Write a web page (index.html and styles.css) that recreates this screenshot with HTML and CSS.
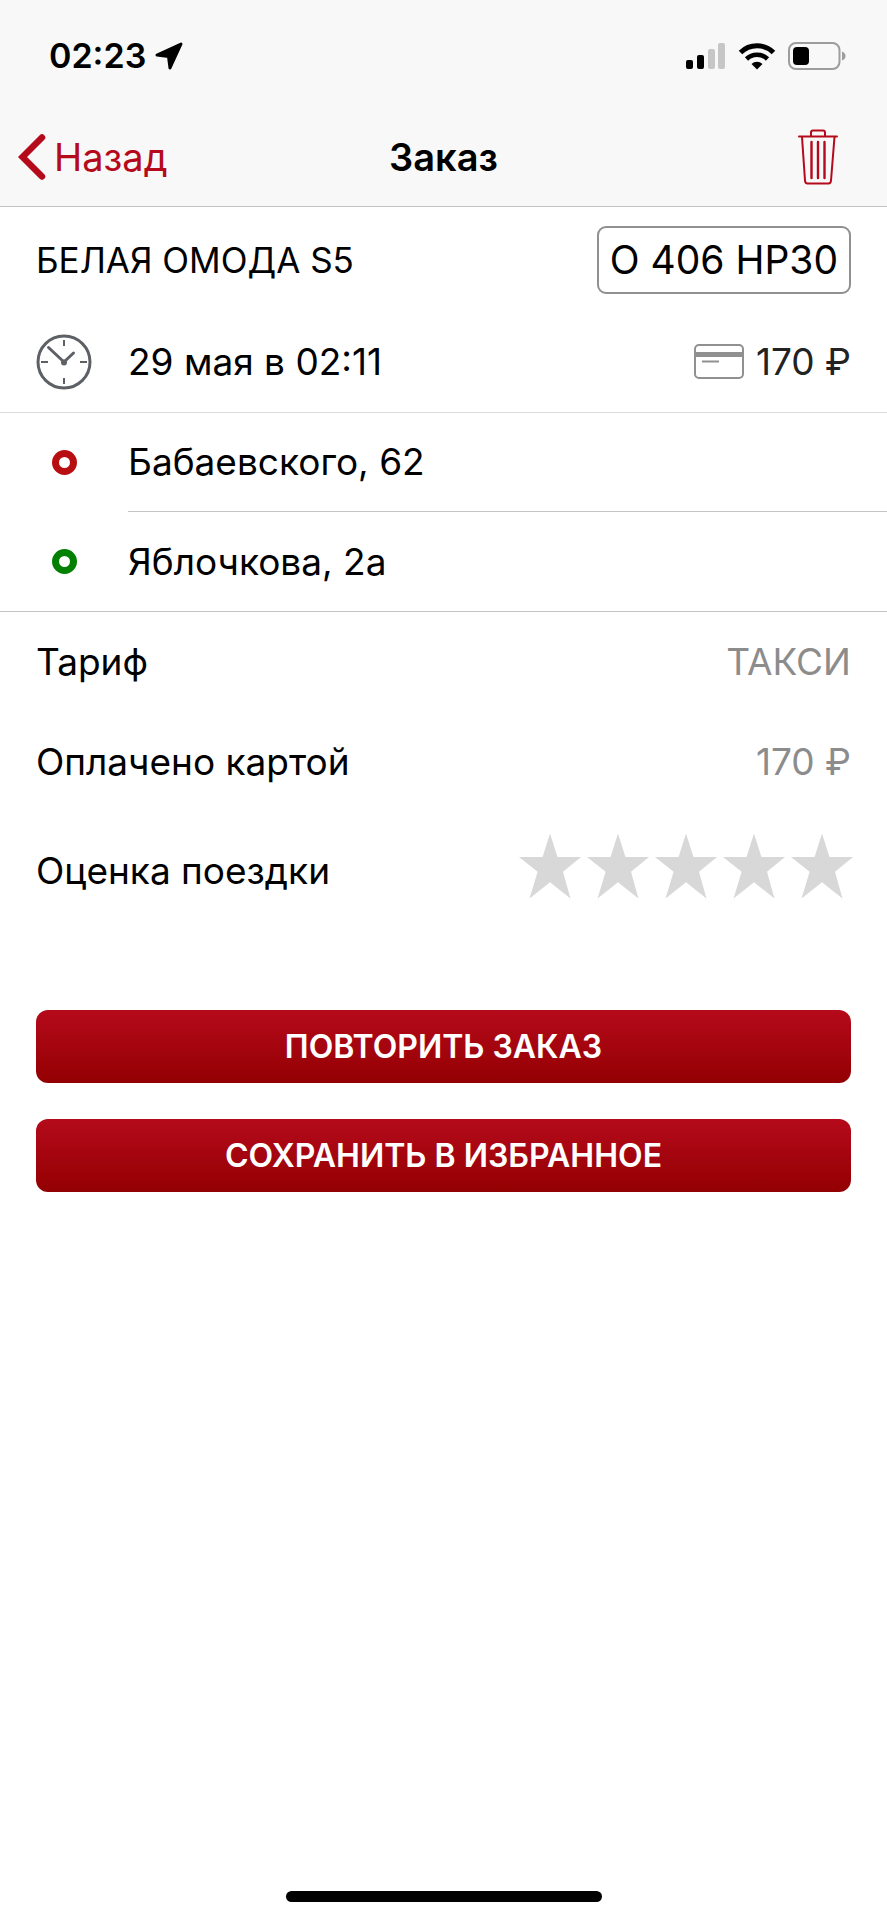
FILE: index.html
```
<!DOCTYPE html>
<html lang="ru">
<head>
<meta charset="utf-8">
<meta name="viewport" content="width=device-width, initial-scale=1">
<title>Заказ</title>
<link rel="stylesheet" href="styles.css">
</head>
<body>
<div class="screen">
  <header class="header">
    <div class="status">
      <div class="status-side">
        <time class="clock">02:23</time>
        <svg class="location" viewBox="0 0 28 28" aria-hidden="true"><path d="M26 2L15 26L13.500 14.500L2 13Z" fill="#000" stroke="#000" stroke-width="3" stroke-linejoin="round"/></svg>
      </div>
      <div class="status-side status-icons">
        <svg class="signal" viewBox="0 0 40 28" aria-hidden="true"><rect x="0" y="18" width="7" height="9" rx="2"/><rect x="11" y="13" width="7" height="14" rx="2"/><rect x="22" y="7" width="7" height="20" rx="2" fill="#c6c6c6"/><rect x="32" y="1" width="7" height="26" rx="2" fill="#c6c6c6"/></svg>
        <svg class="wifi" viewBox="0 0 38 28" aria-hidden="true"><path d="M2.500 10.500A23.500 23.500 0 0 1 35.500 10.500" fill="none" stroke="#000" stroke-width="5"/><path d="M8.500 17A15 15 0 0 1 29.500 17" fill="none" stroke="#000" stroke-width="4.600"/><path d="M13.500 22A8 8 0 0 1 24.500 22L19 27.500Z"/></svg>
        <svg class="battery" viewBox="0 0 58 28" aria-hidden="true"><rect x="1" y="1" width="50.500" height="26" rx="7" fill="none" stroke="#9d9d9d" stroke-width="2"/><rect x="5" y="5" width="16" height="18" rx="4"/><path d="M54 9.500Q57.500 11 57.500 14T54 18.500Z" fill="#9d9d9d"/></svg>
      </div>
    </div>
    <nav class="nav">
      <button class="back" type="button">
        <svg class="chevron" viewBox="0 0 28 46" aria-hidden="true"><path d="M24 3.500L4.500 23L24 42.500" fill="none" stroke="currentColor" stroke-width="6.500" stroke-linecap="round"/></svg>
        <span>Назад</span>
      </button>
      <h1 class="title">Заказ</h1>
      <button class="trash" type="button" aria-label="Удалить заказ">
        <svg class="trash-icon" viewBox="0 0 40 56" aria-hidden="true"><g fill="none" stroke="currentColor" stroke-width="2"><path d="M1 7.500H39" stroke-linecap="round"/><path d="M13 7V3.500Q13 1.500 15 1.500H25Q27 1.500 27 3.500V7"/><path d="M4 8L7 51.500Q7.200 54.500 9.500 54.500H30.500Q32.800 54.500 33 51.500L36.500 8"/><path d="M13.500 13V49M20 13V49M26.500 13V49" stroke-width="2.400" stroke-linecap="round"/></g></svg>
      </button>
    </nav>
  </header>

  <main>
    <section class="group">
      <div class="row row-car">
        <h2 class="car">БЕЛАЯ ОМОДА S5</h2>
        <span class="plate">О 406 НР30</span>
      </div>
      <div class="row">
        <svg class="lead clock-icon" viewBox="0 0 56 56" aria-hidden="true"><g fill="none" stroke="#5d6065"><circle cx="28" cy="28" r="26" stroke-width="3"/><path d="M28 6V12M28 44V50M5 28H12M44 28H51" stroke-width="2"/><path d="M12.500 13.500L28 28L37.500 19" stroke-width="3" stroke-linecap="round"/></g><circle cx="28" cy="28.500" r="3" fill="#5d6065"/></svg>
        <time class="grow">29 мая в 02:11</time>
        <span class="price">
          <svg class="card" viewBox="0 0 50 36" aria-hidden="true"><rect x="1" y="1" width="48" height="33" rx="4" fill="none" stroke="#909090" stroke-width="2"/><path d="M1 10.500H49" stroke="#909090" stroke-width="5"/><path d="M8 17.500H25" stroke="#909090" stroke-width="2"/></svg>
          170 ₽
        </span>
      </div>
    </section>

    <ul class="group route">
      <li class="row"><span class="lead"><i class="dot dot-from"></i></span><span class="stop">Бабаевского, 62</span></li>
      <li class="row"><span class="lead"><i class="dot dot-to"></i></span><span class="stop">Яблочкова, 2а</span></li>
    </ul>

    <section>
      <div class="row"><span class="grow">Тариф</span><span class="value">ТАКСИ</span></div>
      <div class="row"><span class="grow">Оплачено картой</span><span class="value">170 ₽</span></div>
      <div class="row row-rating">
        <span class="grow" id="rating">Оценка поездки</span>
        <div class="stars" role="radiogroup" aria-labelledby="rating">
          <input class="star" type="radio" name="rate" value="1" aria-label="1">
          <input class="star" type="radio" name="rate" value="2" aria-label="2">
          <input class="star" type="radio" name="rate" value="3" aria-label="3">
          <input class="star" type="radio" name="rate" value="4" aria-label="4">
          <input class="star" type="radio" name="rate" value="5" aria-label="5">
        </div>
      </div>
    </section>

    <div class="actions">
      <button class="action" type="button">ПОВТОРИТЬ ЗАКАЗ</button>
      <button class="action" type="button">СОХРАНИТЬ В ИЗБРАННОЕ</button>
    </div>
  </main>

  <div class="home"></div>
</div>
</body>
</html>
```

FILE: styles.css
```
* {
  box-sizing: border-box;
}

body {
  margin: 0;
  background: #fff;
  color: #000;
  font: 400 37px/48px Inter, "Noto Sans", sans-serif;
}

button {
  border: 0;
  padding: 0;
  background: none;
  font: inherit;
  color: inherit;
  cursor: pointer;
}

svg {
  display: block;
  flex: none;
}

.screen {
  display: flex;
  flex-direction: column;
  min-height: 100vh;
}

main {
  flex: 1;
}

.header {
  background: #f8f8f8;
  border-bottom: 1px solid #c4c4c4;
}

.status {
  display: flex;
  align-items: center;
  justify-content: space-between;
  height: 112px;
  padding: 0 41px 0 49px;
}

.status-side {
  display: flex;
  align-items: center;
  gap: 9px;
}

.status-icons {
  gap: 12px;
}

.clock {
  font-size: 34px;
  font-weight: 600;
}

.location {
  width: 28px;
  height: 28px;
}

.signal {
  width: 40px;
  height: 28px;
}

.wifi {
  width: 38px;
  height: 28px;
}

.battery {
  width: 58px;
  height: 28px;
}

.nav {
  display: grid;
  grid-template-columns: 1fr auto 1fr;
  align-items: center;
  height: 94px;
  padding: 0 18px 4px;
}

.back,
.trash {
  display: flex;
  align-items: center;
  color: #b50a1b;
}

.back {
  justify-self: start;
  gap: 8px;
  font-size: 38px;
}

.trash {
  justify-self: end;
  padding: 0 31px;
}

.chevron {
  width: 28px;
  height: 46px;
}

.trash-icon {
  width: 40px;
  height: 56px;
}

.title {
  margin: 0;
  font-size: 38px;
  font-weight: 600;
}

.group {
  margin: 0;
  padding: 0;
  border-bottom: 1px solid #dcdcdc;
}

.route {
  list-style: none;
  border-color: #c4c4c4;
}

.row {
  display: flex;
  align-items: center;
  min-height: 100px;
  padding: 0 36px;
}

.row-car {
  min-height: 105px;
  justify-content: space-between;
}

.row-rating {
  min-height: 118px;
  padding-right: 34px;
}

.car {
  margin: 0;
  font-size: 35px;
  font-weight: 400;
}

.plate {
  padding: 8px 11px;
  border: 2px solid #909090;
  border-radius: 9px;
  font-size: 39px;
}

.lead {
  display: flex;
  flex: none;
  justify-content: center;
  width: 56px;
  margin-right: 36px;
}

.clock-icon {
  height: 56px;
}

.grow {
  flex: 1;
}

.price {
  display: flex;
  align-items: center;
  gap: 12px;
  color: #222;
}

.card {
  width: 50px;
  height: 36px;
}

.dot {
  width: 25px;
  height: 25px;
  border: 7px solid;
  border-radius: 50%;
}

.dot-from {
  color: #b90e11;
}

.dot-to {
  color: #028002;
}

.route .row {
  min-height: 99px;
  padding-right: 0;
}

.stop {
  flex: 1;
  line-height: 98px;
  border-bottom: 1px solid #c4c4c4;
}

.row:last-child .stop {
  border-bottom: 0;
}

.value {
  color: #8c8c8c;
}

.stars {
  display: flex;
  gap: 6px;
  padding-bottom: 10px;
}

.star {
  appearance: none;
  width: 62px;
  height: 65px;
  margin: 0;
  background: #d8d8d8;
  clip-path: polygon(50% 0, 62% 36%, 100% 36%, 71% 59%, 83% 100%, 50% 75%, 17% 100%, 30% 59%, 0 36%, 38% 36%);
  cursor: pointer;
}

.actions {
  display: grid;
  gap: 36px;
  padding: 80px 36px;
}

.action {
  height: 73px;
  border-radius: 12px;
  background: linear-gradient(#b50a1b, #930002);
  color: #fff;
  font-size: 32px;
  font-weight: 600;
}

.home {
  align-self: center;
  width: 316px;
  height: 11px;
  margin-bottom: 18px;
  border-radius: 6px;
  background: #000;
}
```
